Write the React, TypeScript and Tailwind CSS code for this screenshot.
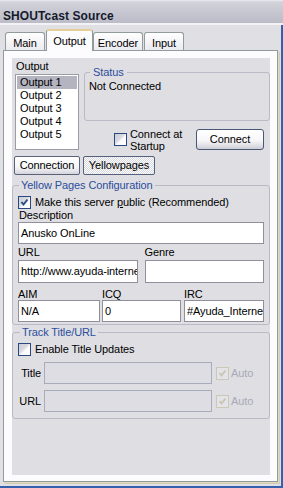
import React from "react";

// XP "silver" style dialog: SHOUTcast Source / Output / Yellowpages

function CheckBox({ checked = false, disabled = false }: { checked?: boolean; disabled?: boolean }) {
  return (
    <span
      className={
        "relative block w-[13px] h-[13px] shrink-0 border " +
        (disabled
          ? "border-[#cbc8b8] bg-[#e4e3e7]"
          : "border-[#2a477f] bg-[linear-gradient(135deg,#cdcdd6_0%,#d9d9e0_42%,#fbfbfc_58%,#ffffff_100%)]")
      }
    >
      {checked && (
        <svg viewBox="0 0 11 11" className="absolute left-0 top-0 w-[11px] h-[11px]">
          <path
            d="M2.5 5 L4.5 7.5 L8.5 2.5"
            fill="none"
            stroke={disabled ? "#c9c6b3" : "#2d4b87"}
            strokeWidth="2"
          />
        </svg>
      )}
    </span>
  );
}

function Tab({ label, className, active = false }: { label: string; className: string; active?: boolean }) {
  if (active) {
    return (
      <div
        className={
          "relative z-10 -mb-px h-[22px] rounded-t-[3px] border border-b-0 border-[#919b9c] border-t-2 border-t-[#e6cf96] bg-[#fcfcfe] pt-[2px] text-center leading-[16px] " +
          className
        }
      >
        {label}
      </div>
    );
  }
  return (
    <div
      className={
        "h-[18px] rounded-t-[3px] border border-b-0 border-[#919b9c] bg-[linear-gradient(#ffffff,#ebebf0)] pt-[2px] text-center leading-[16px] " +
        className
      }
    >
      {label}
    </div>
  );
}

function Field({ value = "", className = "", disabled = false }: { value?: string; className?: string; disabled?: boolean }) {
  return (
    <div
      className={
        "overflow-hidden whitespace-nowrap border px-[2px] " +
        (disabled ? "border-[#a8abb9] bg-[#dedde3] " : "border-[#8f909c] bg-white ") +
        className
      }
    >
      {value}
    </div>
  );
}

export default function App() {
  return (
    <div className="w-[283px] h-[488px] overflow-hidden bg-[#e0dfe3] font-['Liberation_Sans',Arial,sans-serif] text-[11px] tracking-[-0.1px] text-black">
      {/* Caption */}
      <div className="h-[23px] bg-[linear-gradient(#ececf1_0px,#d2d2da_2px,#c8c8d2_11px,#bcbcc8_23px)] pl-[3px] pt-[9px] text-[12px] font-bold leading-[14px] tracking-[0.1px] text-[#141a2c]">
        SHOUTcast Source
      </div>
      <div className="h-[2px] bg-[#f3f3f6]" />

      <div className="h-[463px] border-r-2 border-b-2 border-[#3560ad] pl-[3px] pr-[3px] pt-[4px]">
        {/* Tabs */}
        <div className="flex h-[21px] items-end pl-[2px]">
          <Tab label="Main" className="w-[40px]" />
          <Tab label="Output" className="ml-[1px] w-[47px]" active />
          <Tab label="Encoder" className="w-[50px]" />
          <Tab label="Input" className="ml-[1px] w-[40px]" />
        </div>

        {/* Tab page */}
        <div className="h-[432px] border border-[#919b9c] bg-[#fcfcfe] pt-[7px] pl-[8px] pr-[7px] pb-[6px] shadow-[1px_1px_0_#e0d9bf,2px_2px_0_#d3ccb1]">
          <div className="flex h-full flex-col bg-[#dfdfe3] pt-[2px]">
            {/* Output list + status */}
            <div className="flex items-start">
              <div className="ml-[3px] w-[64px]">
                <div className="ml-[1px] leading-[13px]">Output</div>
                <div className="mt-[1px] h-[76px] border border-[#9c9ca6] bg-white p-[1px] leading-[13px]">
                  <div className="bg-[#b4b3c0] pl-[3px]">Output 1</div>
                  <div className="pl-[3px]">Output 2</div>
                  <div className="pl-[3px]">Output 3</div>
                  <div className="pl-[3px]">Output 4</div>
                  <div className="pl-[3px]">Output 5</div>
                </div>
              </div>

              <div className="ml-[5px] w-[186px]">
                <fieldset className="mt-[6px] h-[55px] rounded-[3px] border border-[#bab9c5]">
                  <legend className="ml-[5px] px-[3px] leading-[13px] text-[#2c4d9c]">Status</legend>
                  <div className="pl-[4px] pt-[1px] leading-[13px]">Not Connected</div>
                </fieldset>

                <div className="mt-[8px] flex items-start">
                  <div className="ml-[30px] mt-[4px]">
                    <CheckBox />
                  </div>
                  <div className="ml-[3px] mt-[-1px] leading-[12px]">
                    Connect at
                    <br />
                    Startup
                  </div>
                  <div className="ml-auto mr-[6px] h-[21px] w-[68px] rounded-[3px] border border-[#4b5875] bg-[linear-gradient(#ffffff_0%,#f7f7f9_55%,#e6e6eb_75%,#cdcdd6_100%)] text-center leading-[19px]">
                    Connect
                  </div>
                </div>
              </div>
            </div>

            {/* Sub tabs */}
            <div className="ml-[2px] mt-[4px] flex">
              <div className="h-[19px] w-[66px] rounded-[2px] border border-[#5a6379] bg-[linear-gradient(#ffffff_0%,#f6f6f8_60%,#d4d4dc_100%)] text-center leading-[17px]">
                Connection
              </div>
              <div className="ml-[3px] h-[19px] w-[72px] rounded-[2px] border border-[#55607c] bg-[repeating-conic-gradient(#ffffff_0%_25%,#d6d6de_0%_50%)] bg-[length:2px_2px] text-center leading-[17px]">
                Yellowpages
              </div>
            </div>

            {/* Yellow pages */}
            <fieldset className="mt-[4px] rounded-[3px] border border-[#bab9c5] pb-[2px]">
              <legend className="ml-[6px] px-[2px] leading-[13px] text-[#2c4d9c]">Yellow Pages Configuration</legend>
              <div className="px-[5px]">
                <div className="mt-[4px] flex items-center">
                  <CheckBox checked />
                  <span className="ml-[4px] leading-[13px]">
                    Make this server <span className="underline">p</span>ublic (Recommended)
                  </span>
                </div>
                <div className="ml-[1px] leading-[13px]">Description</div>
                <Field value="Anusko OnLine" className="h-[22px] leading-[20px]" />

                <div className="mt-[2px] grid grid-cols-2 gap-x-[7px] leading-[13px]">
                  <div>URL</div>
                  <div>Genre</div>
                </div>
                <div className="mt-[1px] grid grid-cols-2 gap-x-[7px]">
                  <Field value="http://www.ayuda-internet.net" className="h-[23px] leading-[21px]" />
                  <Field className="h-[23px]" />
                </div>

                <div className="mt-[5px] flex leading-[12px]">
                  <div className="w-[84px]">AIM</div>
                  <div className="w-[82px]">ICQ</div>
                  <div>IRC</div>
                </div>
                <div className="flex">
                  <Field value="N/A" className="h-[22px] w-[82px] leading-[20px]" />
                  <Field value="0" className="ml-[2px] h-[22px] w-[79px] leading-[20px]" />
                  <Field value="#Ayuda_Internet" className="ml-[3px] h-[22px] w-[80px] leading-[20px]" />
                </div>
              </div>
            </fieldset>

            {/* Track title */}
            <fieldset className="mt-[1px] rounded-[3px] border border-[#bab9c5] pb-[6px]">
              <legend className="ml-[7px] px-[2px] leading-[13px] text-[#2c4d9c]">Track Title/URL</legend>
              <div className="ml-[5px] mt-[4px] flex items-center">
                <CheckBox />
                <span className="ml-[4px] leading-[13px]">Enable Title Updates</span>
              </div>
              <div className="mt-[6px] flex items-center">
                <div className="w-[28px] text-right">Title</div>
                <Field disabled className="ml-[3px] h-[22px] w-[168px]" />
                <div className="ml-[4px]">
                  <CheckBox checked disabled />
                </div>
                <span className="ml-[2px] text-[#a9a8b6]">Auto</span>
              </div>
              <div className="mt-[6px] flex items-center">
                <div className="w-[28px] text-right">URL</div>
                <Field disabled className="ml-[3px] h-[22px] w-[168px]" />
                <div className="ml-[4px]">
                  <CheckBox checked disabled />
                </div>
                <span className="ml-[2px] text-[#a9a8b6]">Auto</span>
              </div>
            </fieldset>
          </div>
        </div>
      </div>
    </div>
  );
}
